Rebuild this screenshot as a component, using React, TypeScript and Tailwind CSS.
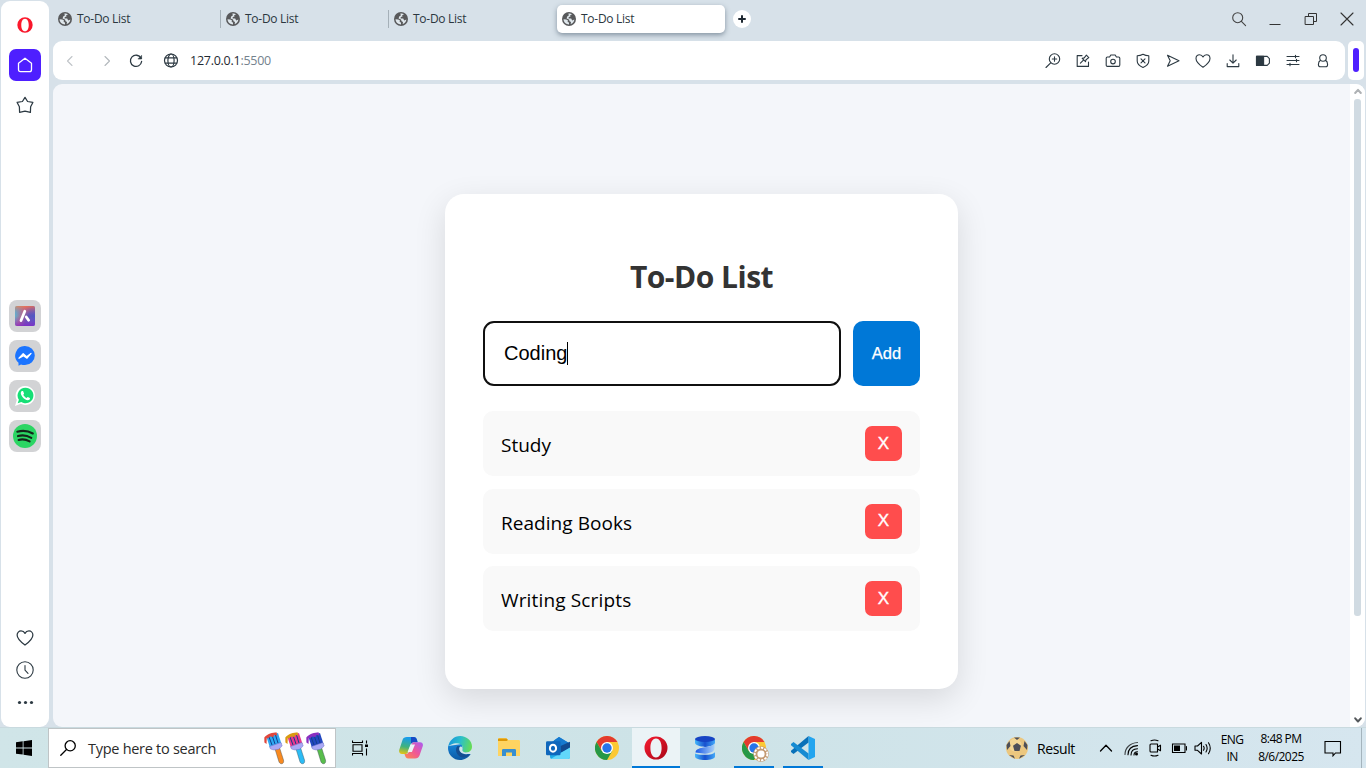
import React from "react";

type P = { children: React.ReactNode; w?: number; h?: number; vb?: string; cls?: string; sw?: number };

function Line({ children, w = 16, h = 16, vb, cls = "text-[#2c3942]", sw = 1.1 }: P) {
  return (
    <svg width={w} height={h} viewBox={vb ?? `0 0 ${w} ${h}`} fill="none" stroke="currentColor" strokeWidth={sw} strokeLinecap="round" strokeLinejoin="round" className={`block shrink-0 ${cls}`}>
      {children}
    </svg>
  );
}

function Art({ children, w = 24, h = 24, vb }: P) {
  return (
    <svg width={w} height={h} viewBox={vb ?? `0 0 ${w} ${h}`} className="block shrink-0">
      {children}
    </svg>
  );
}

const heart = "M8 14.3C5.2 12.3 1 9 1 5.4C1 3.2 2.6 1.7 4.5 1.7C6 1.7 7.3 2.5 8 3.9C8.7 2.5 10 1.7 11.5 1.7C13.4 1.7 15 3.2 15 5.4C15 9 10.8 12.3 8 14.3Z";

function Earth() {
  return (
    <Art w={14} h={14} vb="0 0 14 14">
      <circle cx="7" cy="7" r="7" fill="#58595b" />
      <path d="M1.5 7.2L4.3 7.4L6 8.6L5.6 10L7 10.6L7 12.4C4 12.4 1.7 10.2 1.5 7.2ZM6.2 1.7C7.6 1.3 9 1.6 10 2.3L8 3.4L8.6 4.6L6.8 5L6.6 6.4L9.2 6.6L10.2 8.4L12.4 7.6C12 10 10.6 11.6 8.7 12.1L9 10L7.6 9.2L7 7.6L4.6 6.6L5.2 4.6L7 3.3Z" fill="#dfe7ec" />
    </Art>
  );
}

function Tab({ active = false, divider = false }: { active?: boolean; divider?: boolean }) {
  return (
    <div className={`flex h-7 w-[168px] shrink-0 items-center pl-[5px] ${active ? "rounded-[5px] bg-white shadow-[0_2px_5px_rgba(50,70,90,0.5)]" : ""}`}>
      <Earth />
      <span className="ml-[5px] flex-1 text-[12px] leading-4 tracking-[-0.27px] text-[#2b3740]">To-Do List</span>
      {divider && <span className="h-[18px] w-px bg-[#a5b0b8]" />}
    </div>
  );
}

function TopBar() {
  return (
    <header className="flex h-[41px] shrink-0 items-start pt-[5px]">
      <Tab divider />
      <Tab divider />
      <Tab />
      <Tab active />
      <div className="mt-[5px] ml-2 flex h-[18px] w-[18px] items-center justify-center rounded-full bg-white">
        <Line w={8} h={8} sw={2} cls="text-[#1d2730]"><path d="M4 1V7M1 4H7" /></Line>
      </div>
      <div className="mt-[6px] mr-[11px] ml-auto flex gap-[20px]">
        <Line sw={1.1} cls="text-[#444]"><circle cx="6.7" cy="6.7" r="5" /><path d="M10.4 10.4L14.6 14.6" /></Line>
        <Line sw={1} cls="text-[#333]"><path d="M2.5 13.5H13.5" strokeLinecap="butt" /></Line>
        <Line sw={1} cls="text-[#333]"><path d="M2.5 5.5H10.5V13.5H2.5ZM5.5 5.5V2.5H13.5V10.5H10.5" strokeLinejoin="miter" /></Line>
        <Line sw={1.1} cls="text-[#333]"><path d="M2 2L14 14M14 2L2 14" /></Line>
      </div>
    </header>
  );
}

function AddressBar() {
  return (
    <div className="flex h-[39px] shrink-0 gap-[3px] pr-[2px]">
      <div className="flex flex-1 items-center rounded-[9px] bg-white pr-[14px] pl-[9px]">
        <Line cls="text-[#c0c4c8]"><path d="M10 3.5L5.5 8L10 12.5" /></Line>
        <Line cls="ml-[21px] text-[#b3b8bc]"><path d="M6 3.5L10.5 8L6 12.5" /></Line>
        <Line cls="ml-[13px] text-[#2c3942]" sw={1.3}><path d="M13 5.2A5.6 5.6 0 1 0 13.6 8.5" /><path d="M13.6 2.7V6H10.3Z" fill="currentColor" strokeWidth="0.6" /></Line>
        <Line cls="ml-[19px] text-[#2c3942]" sw={1.2}><circle cx="8" cy="7.5" r="6.5" /><ellipse cx="8" cy="7.5" rx="3.1" ry="6.5" /><path d="M2.3 4.8H13.7M2.3 10.2H13.7" /></Line>
        <span className="ml-[11px] text-[12.5px] leading-4 tracking-[-0.26px] text-[#1f2a33]">127.0.0.1<span className="text-[#74828d]">:5500</span></span>
        <div className="ml-auto flex gap-[14px]">
          <Line><circle cx="9.5" cy="6" r="5.2" /><path d="M5.7 9.8L1 14.5M9.5 3.8V8.2M7.3 6H11.7" /></Line>
          <Line><path d="M7 2.6H2.2V13.4H13.5V9" /><path d="M5.4 10.1L8.2 7.3M7.2 5.4L10.5 8.7L11 6.8L13.8 4.6L11.4 2.2L9.2 4.9Z" /></Line>
          <Line><path d="M1.2 5.2C1.2 4.4 1.8 4 2.4 4H4.6L5.8 2H10.2L11.4 4H13.6C14.2 4 14.8 4.4 14.8 5.2V12C14.8 13 14.2 13.4 13.6 13.4H2.4C1.8 13.4 1.2 13 1.2 12Z" /><circle cx="8" cy="8.6" r="2.3" /></Line>
          <Line><path d="M2.2 2.8C5 2.6 6.5 2 8 1.2C9.5 2 11 2.6 13.8 2.8V8C13.8 11.2 11 13.2 8 14.4C5 13.2 2.2 11.2 2.2 8Z" /><path d="M6 5.8L10 9.8M10 5.8L6 9.8" /></Line>
          <Line><path d="M2.5 2.3L14 7.8L2.5 13.3L5.2 7.8Z" /></Line>
          <Line><path d={heart} /></Line>
          <Line><path d="M8 1.8V10M4.8 7L8 10.2L11.2 7M2.2 10.5V13.6H13.8V10.5" /></Line>
          <Line><path d="M1.5 3.4H12.2L14.4 5.6V10.2L12.2 12.4H1.5Z" /><path d="M1.5 3.4H8.6V12.4H1.5Z" fill="currentColor" /></Line>
          <Line><path d="M2 3.5H14M2 7.5H14M2 11.5H14M10.5 2.2V4.8M11.5 6.2V8.8M5 10.2V12.8" /></Line>
          <Line><circle cx="8" cy="5" r="3.3" /><path d="M5.5 7.3C4 8.2 3.4 9.6 3.4 11.4C3.4 13 4.2 13.8 5.6 13.8H10.4C11.8 13.8 12.6 13 12.6 11.4C12.6 9.6 12 8.2 10.5 7.3" /></Line>
        </div>
      </div>
      <div className="flex w-4 justify-center rounded-[5px] bg-white pt-[7px]">
        <span className="h-6 w-[6px] rounded-[3px] bg-[#4e1fff]" />
      </div>
    </div>
  );
}

function OperaO({ size, a, b }: { size: number; a: string; b: string }) {
  return (
    <Art w={size} h={size} vb="0 0 24 24">
      <defs><linearGradient id={`o${size}`} x1="0" y1="0" x2="1" y2="1"><stop stopColor={a} /><stop offset="1" stopColor={b} /></linearGradient></defs>
      <path fillRule="evenodd" fill={`url(#o${size})`} d="M12 0.5A11.5 11.5 0 1 0 12 23.5A11.5 11.5 0 1 0 12 0.5ZM12 2.6C15.8 2.6 17.6 7 17.6 12C17.6 17 15.8 21.4 12 21.4C8.2 21.4 6.4 17 6.4 12C6.4 7 8.2 2.6 12 2.6Z" />
    </Art>
  );
}

function AppTile({ children }: { children: React.ReactNode }) {
  return <div className="flex h-8 w-8 items-center justify-center rounded-lg bg-[#d2d3d5]">{children}</div>;
}

function Sidebar() {
  return (
    <aside className="mt-px ml-px flex w-12 shrink-0 flex-col items-center rounded-[9px] bg-white">
      <div className="mt-4 h-4"><OperaO size={16} a="#ff1b2d" b="#f5142a" /></div>
      <div className="mt-4 flex h-8 w-8 items-center justify-center rounded-[7px] bg-[#4e1fff]">
        <Line cls="text-white" sw={1.3}><path d="M8 1.2L14.5 6.2V12.5C14.5 14 13.8 14.7 12.5 14.7H3.5C2.2 14.7 1.5 14 1.5 12.5V6.2Z" /></Line>
      </div>
      <div className="mt-[15px]">
        <Line w={18} h={18} vb="0 0 16 16"><path d="M8 1.2L10.3 4.9L15 5.7L13 9.6L12.8 14.6L8 13.4L3.2 14.6L3 9.6L1 5.7L5.7 4.9Z" /></Line>
      </div>
      <div className="mt-[186px] flex flex-col gap-2">
        <AppTile>
          <Art w={20} h={20}>
            <defs><linearGradient id="aria" x1="0" y1="0.3" x2="1" y2="0.7"><stop stopColor="#4ac4dc" /><stop offset=".35" stopColor="#b06a8f" /><stop offset=".65" stopColor="#5b55b9" /><stop offset="1" stopColor="#4a57c8" /></linearGradient><linearGradient id="aria2" x1="0" y1="0" x2="0" y2="1"><stop stopColor="#ff7541" /><stop offset=".5" stopColor="#9a56c0" stopOpacity="0" /><stop offset="1" stopColor="#8b24c8" /></linearGradient></defs>
            <rect width="20" height="20" rx="2" fill="url(#aria)" /><rect width="20" height="20" rx="2" fill="url(#aria2)" opacity=".75" />
            <path d="M9.8 5.2L6 14.6M11.3 11L13.6 14.2" stroke="#fff" strokeWidth="2.8" strokeLinecap="round" />
          </Art>
        </AppTile>
        <AppTile>
          <Art w={20} h={20}>
            <path d="M10 0A9.8 9.5 0 0 1 10 19C8.4 19 7 18.8 6 18.4L3.5 19.8V16.8A9.6 9.6 0 0 1 10 0Z" fill="#1b74ff" />
            <path d="M4 12.3L8.2 7.8L11.6 10.7L16 7.4L12 12.2L8.5 9.8Z" fill="#fff" stroke="#fff" strokeWidth="1.3" strokeLinejoin="round" />
          </Art>
        </AppTile>
        <AppTile>
          <Art w={20} h={20}>
            <path d="M10.5 0A9.5 9.5 0 1 1 5.8 17.8L0 20L1.8 14A9.5 9.5 0 0 1 10.5 0Z" fill="#fff" />
            <path d="M10.5 1.7A7.8 7.8 0 1 1 6.3 16L2.7 17.2L3.9 13.8A7.8 7.8 0 0 1 10.5 1.7Z" fill="#16df76" />
            <path d="M7 5C5.3 5.8 5.3 8 7.3 10.8C9.4 13.5 12.6 15 14.3 13.8C15.4 12.9 15 12 14.4 11.7L12.7 10.9L11.6 12C10.2 11.4 8.8 10.1 8.3 8.8L9.1 7.7L8.3 5.4C8 4.8 7.5 4.8 7 5Z" fill="#fff" />
          </Art>
        </AppTile>
        <AppTile>
          <Art>
            <circle cx="12" cy="12" r="12" fill="#2bd563" />
            <path d="M4.3 7.8C9.5 6.3 15 6.8 19.8 9.5M5 12.1C9.5 10.8 14 11.4 18.3 13.8M5.6 15.9C9.3 14.9 13 15.3 16.6 17.4" fill="none" stroke="#14261a" strokeWidth="2.1" strokeLinecap="round" />
          </Art>
        </AppTile>
      </div>
      <div className="mt-auto mr-px mb-[16px] flex flex-col items-center gap-[14px]">
        <Line w={18} h={18} vb="0 0 16 16"><path d={heart} /></Line>
        <Line w={18} h={18}><circle cx="9" cy="9" r="8.2" /><path d="M9 4.5V9.2L12 12.3" /></Line>
        <Line w={18} h={18}><g fill="currentColor" stroke="none"><circle cx="3.5" cy="9.5" r="1.6" /><circle cx="9.5" cy="9.5" r="1.6" /><circle cx="15.5" cy="9.5" r="1.6" /></g></Line>
      </div>
    </aside>
  );
}

function Item({ text, tracking }: { text: string; tracking: string }) {
  return (
    <li className="flex h-[65px] items-center justify-between rounded-[10px] bg-[#f9f9f9] px-[18px]">
      <span className={`mt-[3px] text-[19px] leading-6 text-black ${tracking}`}>{text}</span>
      <button className="flex h-[35px] w-[37px] items-center justify-center rounded-[7px] bg-[#ff4d4d] font-['Liberation_Sans',sans-serif] text-[17px] leading-5 text-white [-webkit-text-stroke:0.4px_white]">X</button>
    </li>
  );
}

function TodoCard() {
  return (
    <main className="mt-[110px] h-[495px] w-[513px] rounded-[19px] bg-white px-[38px] pt-16 shadow-[0_10px_32px_rgba(0,0,0,0.12)]">
      <h1 className="h-[63px] text-center text-[30px] leading-[38px] font-bold tracking-[-0.5px] text-[#333]">To-Do List</h1>
      <div className="flex gap-3 font-['Liberation_Sans',sans-serif]">
        <div className="flex h-[65px] w-[358px] items-center rounded-[11px] border-2 border-[#101010] bg-white pl-[19px]">
          <span className="text-[20px] leading-[23px] text-black">Coding</span>
          <span className="h-[23px] w-px bg-black" />
        </div>
        <button className="h-[65px] w-[67px] rounded-[10px] bg-[#0078d7] text-[16.5px] text-white [-webkit-text-stroke:0.25px_white]">Add</button>
      </div>
      <ul className="mt-[25px] flex flex-col gap-[12.6px]">
        <Item text="Study" tracking="tracking-[0px]" />
        <Item text="Reading Books" tracking="tracking-[0.05px]" />
        <Item text="Writing Scripts" tracking="tracking-[0.15px]" />
      </ul>
    </main>
  );
}

function Page() {
  return (
    <div className="mt-1 mr-px flex flex-1 overflow-hidden rounded-[9px] bg-[#f4f6fa]">
      <div className="flex flex-1 justify-center">
        <TodoCard />
      </div>
      <div className="flex w-[15px] flex-col items-center bg-white">
        <Line w={8} h={15} sw={2} cls="text-[#aeb1b4]"><path d="M1.2 9L4 5.8L6.8 9" /></Line>
        <span className="h-[517px] w-[7px] rounded-[3px] bg-[#d1dbe2]" />
        <Line w={8} h={15} sw={2} cls="mt-auto text-[#55595c]"><path d="M1.2 6.3L4 9.5L6.8 6.3" /></Line>
      </div>
    </div>
  );
}

function Brush({ tip, bristle, handle }: { tip: string; bristle: string; handle: string }) {
  return (
    <Art w={21} h={33}>
      <path d="M11 17L15.5 15.5L19.5 28C20.5 32 16.5 33 15 30Z" fill={handle} stroke="#33414d" strokeWidth=".4" />
      <path d="M2.5 5L14 1L17.5 12L6 16Z" fill={bristle} />
      <path d="M5 5L8 13M8.3 4L11 12M11.5 3L14 11" stroke="#123f8c" strokeWidth="1" />
      <path d="M0.3 5.5C3 2 9 0.5 12.5 0.3L13.3 3.5L10 3L9.5 5L6 4.5L4 6.5L2.8 6L2.5 12L0.4 10.5Z" fill={tip} />
      <path d="M5.5 14.5L17 10.5L18.2 14L14.5 17.3L10 18L6.5 17Z" fill="#a9a8f5" stroke="#5d62ba" strokeWidth=".4" />
    </Art>
  );
}

function ChromeLogo() {
  return (
    <Art>
      <circle cx="12" cy="12" r="12" fill="#fcc934" />
      <path d="M12 6H22.4A12 12 0 0 0 1.6 6L6.8 15Z" fill="#e33b2e" />
      <path d="M1.6 6A12 12 0 0 0 12 24L17.2 15L6.8 15Z" fill="#279847" />
      <circle cx="12" cy="12" r="6" fill="#fff" />
      <circle cx="12" cy="12" r="4.7" fill="#2674ea" />
    </Art>
  );
}

function TaskApp({ children, state = "none" }: { children: React.ReactNode; state?: "none" | "open" | "active" }) {
  return (
    <div className="flex w-[49px] flex-col">
      <div className={`flex h-full w-12 flex-col items-center pt-2 ${state === "active" ? "bg-[#ebf3f6]" : ""}`}>
        <div className="flex h-6 items-center">{children}</div>
        {state !== "none" && <span className={`mt-auto h-[2px] bg-[#0078d7] ${state === "active" ? "w-12" : "w-10"}`} />}
      </div>
    </div>
  );
}

function Taskbar() {
  return (
    <footer className="flex h-[41px] shrink-0 border-t border-[#c9dadf] bg-linear-to-r from-[#d0e5e8] via-[#cde3e7] to-[#d6e6ef]">
      <div className="flex w-12 items-center justify-center">
        <Art w={16} h={16}><path d="M0 2.3L6.7 1.3V7.5H0ZM7.5 1.2L16 0V7.5H7.5ZM0 8.4H6.7V14.6L0 13.7ZM7.5 8.4H16V16L7.5 14.8Z" fill="#000" /></Art>
      </div>
      <div className="flex w-[288px] items-center border border-[#bfc4c6] bg-white pl-[11px]">
        <Line sw={1.3} cls="text-black"><circle cx="10.2" cy="5.8" r="5.1" /><path d="M6.5 9.5L0.8 15.2" /></Line>
        <span className="mt-[2px] ml-3 text-[14.5px] leading-5 tracking-[-0.28px] text-[#2b2b2b]">Type here to search</span>
        <div className="mt-px mr-[8px] ml-auto flex">
          <Brush tip="#e0483e" bristle="#2ea8f2" handle="#f98a20" />
          <Brush tip="#d99a12" bristle="#e8388f" handle="#2cbcf5" />
          <Brush tip="#8a2fc0" bristle="#2348c0" handle="#58bd4c" />
        </div>
      </div>
      <div className="flex w-[51px] items-center pl-4">
        <Line w={16} h={16} sw={1.1} cls="text-black"><path d="M0.5 0.5V2.5H10.5V0.5M0.5 15.5V13.5H10.5V15.5M1 4.8H10V11.2H1ZM14.5 0.5V3.5M14.5 8.5V15.5" strokeLinecap="butt" strokeLinejoin="miter" /><path d="M13 4.5H16V7H13Z" fill="currentColor" stroke="none" /></Line>
      </div>
      <TaskApp>
        <Art>
          <defs>
            <linearGradient id="c1" x1="0.3" y1="0" x2="0.1" y2="1"><stop stopColor="#169bee" /><stop offset=".55" stopColor="#40b37c" /><stop offset="1" stopColor="#f1c40e" /></linearGradient>
            <linearGradient id="c2" x1="1" y1="0" x2="0" y2="1"><stop stopColor="#a85cf5" /><stop offset=".5" stopColor="#ef5798" /><stop offset="1" stopColor="#ff8a48" /></linearGradient>
          </defs>
          <path d="M8 1H14.5C17 1 17.6 2.5 18 4L18.6 6.2H15C12.8 6.2 12 7.5 11.4 9.2L9 16C8.4 17.6 7.6 18 6 18H3C0.5 18 -0.3 16 0.2 14L3.5 4C4.3 1.8 5.5 1 8 1Z" fill="url(#c1)" />
          <path d="M12 1H14.5C17 1 17.6 2.5 18 4L18.6 6.2H15C13.4 6.2 12.6 6.8 12 8Z" fill="#164bc5" />
          <path d="M16 22.5H9.5C7 22.5 6.4 21 6 19.5L5.5 18H7C9 18 9.8 16.5 10.4 14.8L12.8 8C13.4 6.5 14 6.2 15.8 6.2H21C23.5 6.2 24.3 8 23.8 10L20.5 19.5C19.7 21.5 18.5 22.5 16 22.5Z" fill="url(#c2)" />
          <path d="M11.5 8.5H16L12.9 16H8.6Z" fill="#e9f4f6" />
        </Art>
      </TaskApp>
      <TaskApp>
        <Art>
          <defs>
            <linearGradient id="e1" x1="0" y1="0.3" x2="1" y2="0.5"><stop stopColor="#1595dc" /><stop offset=".5" stopColor="#2cbfca" /><stop offset="1" stopColor="#65dc55" /></linearGradient>
            <linearGradient id="e2" x1="0" y1="0" x2="0" y2="1"><stop stopColor="#1684d8" /><stop offset="1" stopColor="#0c59a4" /></linearGradient>
          </defs>
          <path d="M0 12A12 12 0 0 0 12 24C16.5 24 20.5 21.5 22.6 18L15 15.5L14 8L0.2 10Z" fill="url(#e2)" />
          <path d="M9.5 10C6.5 13 8 20 14.5 21.5C17.5 22 20.8 20.5 22.5 18C19.5 19.2 13.5 19 11.7 14.5C11.1 12.8 11.3 11 12.2 10.2Z" fill="#154e91" />
          <path d="M0.2 11C1 4.7 6 0 12.2 0C19 0 24 5.2 24 10.5C24 14.5 21 16.5 18 16.5C15.5 16.5 13.8 15.6 14.3 14.4C16 11.5 14 7.3 9 7.2C4.5 7.2 1.2 9 0.2 11Z" fill="url(#e1)" />
          <path d="M11.6 11C13 9.5 15 11 14.5 13.7C14 15.2 16 16.5 18.5 16.5C21 16.5 22.3 15.6 23.3 14.7L23.5 18H20C14.5 19 9.8 15.3 11.6 11Z" fill="#d0e5e9" />
        </Art>
      </TaskApp>
      <TaskApp>
        <Art w={22} h={20}>
          <path d="M0 1.3C0 .6.5 0 1.2 0H8L10 2H20.8Q22 2 22 3.2V18H0Z" fill="#fed461" />
          <path d="M0 3V1.3Q0 .5 1 .5H8.6L10 2L8.6 3Z" fill="#dc9808" />
          <path d="M4 18V12.3Q4 11 5.3 11H16.7Q18 11 18 12.3V18H14V14.5H8V18Z" fill="#378fd0" />
        </Art>
      </TaskApp>
      <TaskApp>
        <Art>
          <path d="M3 8L13 1L23.5 7.5L24 12L14 18H3Z" fill="#1686dc" />
          <path d="M8 4.5L13 1L23 7L16 11L8 8Z" fill="#1579cf" />
          <path d="M14.5 12V10L24 5.8V12.5L14.5 17.5Z" fill="#104a91" />
          <path d="M24 12V21Q24 23 22 23H6Q4 23 4 21V17L12 18Z" fill="#1ea9e8" />
          <path d="M5 22.7L24 11.5V21Q24 23 22 23H6Z" fill="#62d7fa" />
          <rect y="5.3" width="14.5" height="14" rx="1.3" fill="#0f67bc" />
          <ellipse cx="7" cy="12.2" rx="3.1" ry="3.5" fill="none" stroke="#fff" strokeWidth="2" />
        </Art>
      </TaskApp>
      <TaskApp><ChromeLogo /></TaskApp>
      <TaskApp state="active"><OperaO size={24} a="#f81c30" b="#a80718" /></TaskApp>
      <TaskApp>
        <Art w={20} h={24}>
          <defs><linearGradient id="s1"><stop stopColor="#45b7fa" /><stop offset=".5" stopColor="#1750ce" /><stop offset="1" stopColor="#43a9f8" /></linearGradient><linearGradient id="s2"><stop stopColor="#1858e8" /><stop offset="1" stopColor="#a9d0f7" /></linearGradient></defs>
          <path d="M0 3.2V6.5C0 9 4 10.2 8 10.6L10 11C16 10.3 20 9 20 6.5V3.2Z" fill="url(#s1)" />
          <path d="M19.5 7.5C18 10 14 10.6 10 11.2C5 12 0.5 13 0.5 16.5L10 17.8C16 17 19.5 15.5 19.5 12Z" fill="url(#s2)" />
          <path d="M0 17.5V20.5C0 22.6 4.5 24 10 24S20 22.6 20 20.5V16C19 18 15 18.8 10 18.8S1 18.5 0 17.5Z" fill="url(#s1)" />
          <ellipse cx="10" cy="3" rx="10" ry="3" fill="#1644c4" />
        </Art>
      </TaskApp>
      <TaskApp state="open">
        <div className="relative">
          <ChromeLogo />
          <div className="absolute top-[10px] left-[11px]">
            <Art w={16} h={16}><circle cx="8" cy="8" r="7" fill="#c49b73" stroke="#c49b73" strokeWidth="1.5" /><circle cx="8" cy="8" r="6.3" fill="none" stroke="#fff" strokeWidth="1.8" strokeDasharray="2.4 1.2" /><circle cx="8" cy="8" r="3.6" fill="#fff" /></Art>
          </div>
        </div>
      </TaskApp>
      <TaskApp state="open">
        <Art>
          <path d="M17.5 0L24 3V21L17.5 24Z" fill="#23a5ef" />
          <path d="M17.5 0V6.5L2.5 18L0 16V14.8Z" fill="#0870b8" />
          <path d="M17.5 24V17.5L2.5 6L0 8V9.2Z" fill="#168bd2" />
        </Art>
      </TaskApp>
      <div className="ml-auto flex items-center text-black">
        <Art w={22} h={22}>
          <circle cx="11" cy="11" r="11" fill="#ecc77e" />
          <circle cx="9" cy="8" r="6.5" fill="#f8dfa5" opacity=".6" />
          <path d="M7 8.7L11 6L15 8.7L13.5 14H8.5ZM8 .5L14 .5L11 3ZM.5 8L3.5 4L4.5 9L1 13ZM21.5 8L18.5 4L17.5 9L21 13ZM3 18L7.5 18.5L9 21.8ZM19 18L14.5 18.5L13 21.8Z" fill="#4d4f58" />
        </Art>
        <span className="mt-px ml-[9px] w-[62px] text-[14px] leading-5 tracking-[-0.4px]">Result</span>
        <Line w={14} h={10} sw={1.3} cls="text-black"><path d="M1.5 8L7 2.2L12.5 8" /></Line>
        <Line w={16} h={16} sw={1.1} cls="ml-[11px] text-black"><path d="M1 14.5C1 8 6 3 13.5 2.5" opacity=".7" /><path d="M4 14.8C4 9.5 7.5 6 13.5 5.6M7 15C7 11.5 9.5 9 13.5 8.8M10 15C10 13 11.2 12 13.5 11.8" /><circle cx="12.5" cy="14" r="1.5" fill="currentColor" stroke="none" /></Line>
        <Line w={16} h={18} sw={1.1} cls="ml-[7px] text-black"><path d="M4 1.8Q7.5 .2 11 1.8M4 16.2Q7.5 17.8 11 16.2M4 5H10.5V13H4Q3 13 3 12V6Q3 5 4 5ZM10.5 8L13.5 6.2V11.8L10.5 10" /></Line>
        <Line w={16} h={16} sw={1.1} cls="ml-2 text-black"><path d="M1.5 4H14V12.5H1.5ZM15.5 6.5V10" strokeLinejoin="miter" /><path d="M3 5.5H9V11H3Z" fill="currentColor" stroke="none" /></Line>
        <Line w={18} h={16} sw={1.1} cls="ml-[7px] text-black"><path d="M1 6H3.5L7.5 2.3V14L3.5 10.3H1ZM9.5 6.3Q10.8 8.2 9.5 10.2M12 4.5Q14.3 8.2 12 12M14.5 2.8Q18 8.2 14.5 13.7" /></Line>
        <div className="ml-[6px] w-[28px] text-center text-[12px] leading-[17px] tracking-[-0.6px]">ENG<br />IN</div>
        <div className="ml-[8px] w-[54px] text-center text-[12px] leading-[18px] tracking-[-0.55px] whitespace-nowrap">8:48 PM<br />8/6/2025</div>
        <Line w={18} h={17} sw={1.1} cls="ml-4 text-black"><path d="M1 1.5H16.5V13H11.5L9 15.8V13H1Z" strokeLinejoin="miter" /></Line>
        <span className="mr-1 ml-[19px] h-10 w-px bg-[#a4b4bd]" />
      </div>
    </footer>
  );
}

export default function App() {
  return (
    <div className="flex h-[768px] w-[1366px] flex-col overflow-hidden bg-[#d7e1e9] font-['Open_Sans','Noto_Sans',sans-serif]">
      <div className="flex h-[727px] shrink-0 gap-1">
        <Sidebar />
        <section className="flex min-w-0 flex-1 flex-col">
          <TopBar />
          <AddressBar />
          <Page />
        </section>
      </div>
      <Taskbar />
    </div>
  );
}
